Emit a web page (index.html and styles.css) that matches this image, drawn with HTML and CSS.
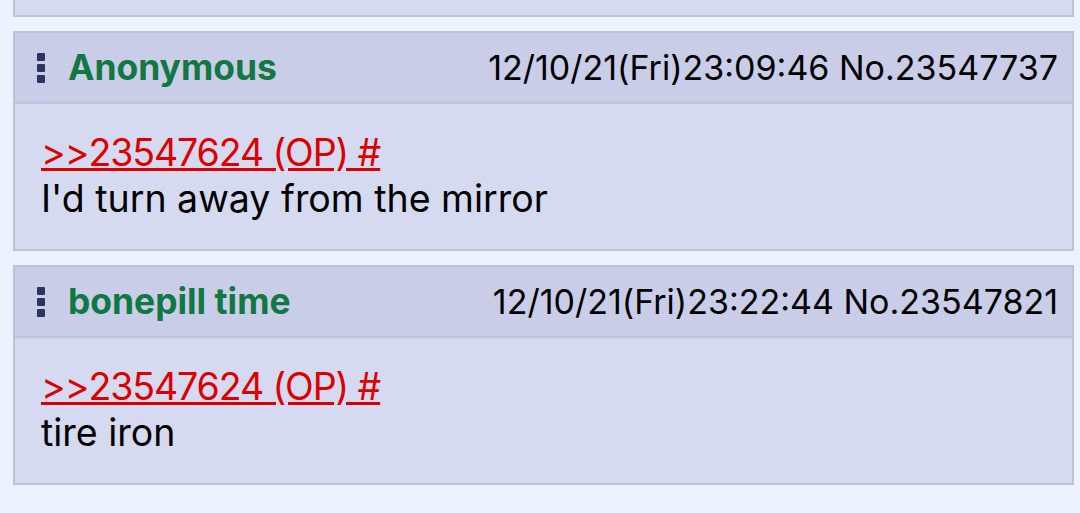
FILE: index.html
```html
<!DOCTYPE html>
<html lang="en">
<head>
    <meta charset="UTF-8">
    <meta name="viewport" content="width=device-width, initial-scale=1.0">
    <title>Thread</title>
    <link rel="stylesheet" href="styles.css">
</head>
<body>
    <div class="thread">
        <!-- bottom of the previous post, scrolled off -->
        <div class="post post-prev"></div>

        <div class="post">
            <div class="post-head">
                <span class="menu"><i></i><i></i><i></i></span>
                <span class="name">Anonymous</span>
                <span class="meta">12/10/21(Fri)23:09:46 No.23547737</span>
            </div>
            <div class="post-body">
                <a class="quote" href="#p23547624">&gt;&gt;23547624 (OP) #</a><br>
                I'd turn away from the mirror
            </div>
        </div>

        <div class="post">
            <div class="post-head">
                <span class="menu"><i></i><i></i><i></i></span>
                <span class="name">bonepill time</span>
                <span class="meta">12/10/21(Fri)23:22:44 No.23547821</span>
            </div>
            <div class="post-body">
                <a class="quote" href="#p23547624">&gt;&gt;23547624 (OP) #</a><br>
                tire iron
            </div>
        </div>
    </div>
</body>
</html>
```

FILE: styles.css
```css
body {
    margin: 0;
    padding: 0;
    background-color: #eef2ff;
    font-family: Inter, "Noto Sans", sans-serif;
    color: #000;
}
.thread {
    display: flex;
    flex-direction: column;
    gap: 14px;
    margin: 0 6px 0 13px;
}
.post {
    background: #d6daf0;
    border: 2px solid #b7c5d9;
}
.post-prev {
    height: 15px;
    border-top: none;
}
.post-head {
    display: flex;
    align-items: center;
    height: 69px;
    padding: 0 14px 0 22px;
    background: #c9cde8;
    border-bottom: 2px solid #b7c5d9;
}
.menu {
    display: flex;
    flex-direction: column;
    gap: 3px;
    margin-right: 23px;
}
.menu i {
    display: block;
    width: 8px;
    height: 8px;
    border-radius: 1px;
    background: #2e3460;
}
.name {
    font-weight: 700;
    font-size: 35.4px;
    color: #117743;
}
.meta {
    margin-left: auto;
    font-size: 34px;
}
.post-body {
    height: 145px;
    padding: 0 26px;
    box-sizing: border-box;
    padding-top: 26px;
    font-size: 37.5px;
    line-height: 46px;
}
.quote {
    color: #dd0000;
    letter-spacing: -1.1px;
    text-decoration: underline;
}
```
